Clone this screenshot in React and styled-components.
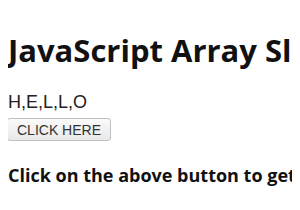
import React, { useState } from "react";
import styled, { createGlobalStyle } from "styled-components";

const Global = createGlobalStyle`
  html, body { background: #fff; }
  body {
    margin: 8px;
    font-family: "Liberation Serif", serif;
    color: #000;
    overflow: hidden;
  }
`;

const Title = styled.h1`
  font-family: "Open Sans", "Noto Sans", sans-serif;
  font-size: 31px;
  font-weight: 700;
  margin: 21px 0;
  white-space: nowrap;
  color: #111;
`;

const Letters = styled.p`
  font-family: "Liberation Sans", Arial, sans-serif;
  font-size: 18px;
  margin: 1px 0 5px;
  color: #222;
`;

const Button = styled.button`
  display: block;
  height: 23px;
  font-family: "Liberation Sans", Arial, sans-serif;
  font-size: 14px;
  color: #333;
  padding: 0 9px;
  margin-left: -1px;
  background: linear-gradient(#fafafa, #e8e8e8);
  border: 1px solid #c0c0c0;
  border-radius: 3px;
`;

const Note = styled.h3`
  font-family: "Open Sans", "Noto Sans", sans-serif;
  font-size: 18px;
  font-weight: 700;
  margin: 22px 0;
  white-space: nowrap;
  color: #111;
`;

export default function App() {
  const [text, setText] = useState("H,E,L,L,O");
  return (
    <>
      <Global />
      <Title>JavaScript Array Slice() Method</Title>
      <Letters>{text}</Letters>
      <Button onClick={() => setText("H,E,L,L,O")}>CLICK HERE</Button>
      <Note>Click on the above button to get the sliced array</Note>
    </>
  );
}
